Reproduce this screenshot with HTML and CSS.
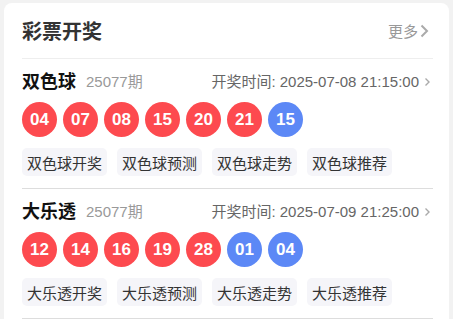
FILE: index.html
```html
<!DOCTYPE html>
<html lang="zh-CN">

<head>
  <meta charset="UTF-8">
  <meta name="viewport" content="width=device-width, initial-scale=1.0">
  <title>彩票开奖</title>
  <link rel="stylesheet" href="styles.css">
</head>

<body>
  <main class="card">
    <header class="card-head">
      <h2>彩票开奖</h2>
      <a class="more" href="#">更多
        <svg width="9" height="14" viewBox="0 0 9 14"><path d="M1.5 1.5 L7 7 L1.5 12.5" fill="none" stroke="#aaa" stroke-width="2"/></svg>
      </a>
    </header>

    <section class="lottery">
      <div class="lottery-head">
        <span class="name">双色球</span>
        <span class="issue">25077期</span>
        <span class="time">开奖时间: 2025-07-08 21:15:00
          <svg width="7" height="10" viewBox="0 0 7 10"><path d="M1.5 1.5 L5 5 L1.5 8.5" fill="none" stroke="#aaa" stroke-width="1.4"/></svg>
        </span>
      </div>
      <div class="balls">
        <span class="ball red">04</span>
        <span class="ball red">07</span>
        <span class="ball red">08</span>
        <span class="ball red">15</span>
        <span class="ball red">20</span>
        <span class="ball red">21</span>
        <span class="ball blue">15</span>
      </div>
      <div class="tags">
        <a href="#">双色球开奖</a>
        <a href="#">双色球预测</a>
        <a href="#">双色球走势</a>
        <a href="#">双色球推荐</a>
      </div>
    </section>

    <section class="lottery">
      <div class="lottery-head">
        <span class="name">大乐透</span>
        <span class="issue">25077期</span>
        <span class="time">开奖时间: 2025-07-09 21:25:00
          <svg width="7" height="10" viewBox="0 0 7 10"><path d="M1.5 1.5 L5 5 L1.5 8.5" fill="none" stroke="#aaa" stroke-width="1.4"/></svg>
        </span>
      </div>
      <div class="balls">
        <span class="ball red">12</span>
        <span class="ball red">14</span>
        <span class="ball red">16</span>
        <span class="ball red">19</span>
        <span class="ball red">28</span>
        <span class="ball blue">01</span>
        <span class="ball blue">04</span>
      </div>
      <div class="tags">
        <a href="#">大乐透开奖</a>
        <a href="#">大乐透预测</a>
        <a href="#">大乐透走势</a>
        <a href="#">大乐透推荐</a>
      </div>
    </section>
  </main>
</body>

</html>
```

FILE: styles.css
```css
body {
  background: #f2f2f2;
  font-family: "Liberation Sans", "Noto Sans CJK SC", sans-serif;
  margin: 0;
  padding: 3px 4px 0 4px;
}

.card {
  background: #fff;
  border-radius: 8px 8px 0 0;
  padding: 0 16px 0 18px;
}

.card-head {
  align-items: center;
  border-bottom: 1px solid #eee;
  display: flex;
  height: 55px;
  justify-content: space-between;
}

.card-head h2 {
  color: #333;
  font-size: 20px;
  margin: 0;
}

.more {
  align-items: center;
  color: #999;
  display: flex;
  font-size: 15px;
  gap: 2px;
  margin-right: 4px;
  text-decoration: none;
}

.lottery {
  border-bottom: 1px solid #ddd;
  padding: 10px 0 12px;
}

.lottery-head {
  align-items: center;
  display: flex;
  height: 22px;
}

.name {
  color: #111;
  font-size: 18px;
  font-weight: bold;
}

.issue {
  color: #999;
  font-size: 15px;
  margin-left: 10px;
}

.time {
  align-items: center;
  color: #666;
  display: flex;
  font-size: 15px;
  gap: 5px;
  margin-left: auto;
  margin-right: 2px;
}

.time svg {
  margin-top: 3px;
}

.balls {
  display: flex;
  gap: 6px;
  margin-top: 11px;
}

.ball {
  align-items: center;
  border-radius: 50%;
  color: #fff;
  display: flex;
  font-size: 17px;
  font-weight: bold;
  height: 35px;
  justify-content: center;
  width: 35px;
}

.red {
  background: #fd4a4f;
}

.blue {
  background: #5c88f6;
}

.tags {
  display: flex;
  gap: 10px;
  margin-top: 11px;
}

.tags a {
  align-items: center;
  background: #f5f5f9;
  border-radius: 5px;
  color: #333;
  display: flex;
  font-size: 15px;
  height: 28px;
  padding: 0 5px;
  text-decoration: none;
}
```
